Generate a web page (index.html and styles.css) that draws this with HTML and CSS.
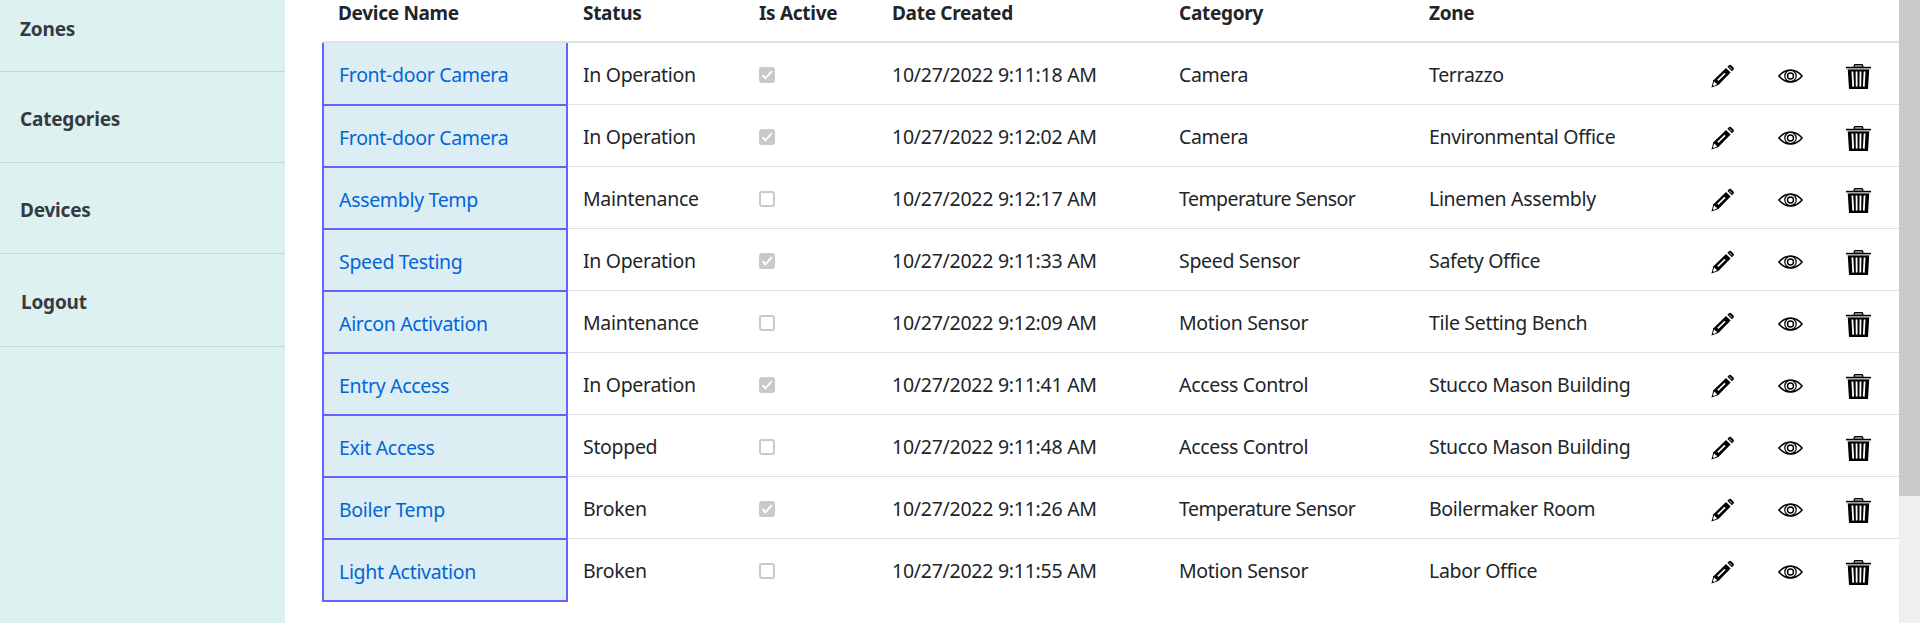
FILE: index.html
```html
<!DOCTYPE html>
<html lang="en">
<head>
<meta charset="utf-8">
<title>Devices</title>
<link rel="stylesheet" href="styles.css">
</head>
<body>
<svg class="sprite" aria-hidden="true">
  <symbol id="pencil" viewBox="0 0 24 24">
    <path d="M.4 23.5 2.4 16.2 15 4 19.6 8.6 7.4 21Z" fill="#000"/>
    <path d="M16.4 2.8 18.2 1Q19.2.3 20.2 1.2L22.4 3.4Q23.3 4.5 22.6 5.4L20.8 7.2Z" fill="#000"/>
    <path d="M6.8 16.3 14 9.4" stroke="#fff" stroke-width="1.6"/>
    <path d="M1.9 21 3.2 17.4 6.2 20.3 2.9 21.9Z" fill="#fff"/>
    <path d="M18.4 2.8 20.8 5.2" stroke="#fff" stroke-width=".9"/>
  </symbol>
  <symbol id="eye" viewBox="0 0 25 14">
    <g fill="none" stroke="#000" stroke-width="1.5">
      <path d="M.9 7Q6 .9 12.5.9T24.1 7Q19 13.1 12.5 13.1T.9 7Z"/>
      <circle cx="12.5" cy="7" r="5.7" stroke-width="1.2"/>
      <circle cx="12.5" cy="7" r="3" stroke-width="1.4"/>
    </g>
  </symbol>
  <symbol id="trash" viewBox="0 0 25 25">
    <path d="M8.2 3V1.6Q8.4.5 9.8.5h5.4q1.4 0 1.6 1.1V3" fill="#888" stroke="#000" stroke-width="1.2"/>
    <path d="M0 2.8h25v1.6H0z" fill="#000"/>
    <path d="M1.4 4.4h22.2v1.2H1.4z" fill="#aaa"/>
    <path d="M1.8 5.5h21.4L22 25H3z" fill="#000"/>
    <path d="M6.4 7.5 7.2 22.6M10.5 7.5l.2 15.1M14.5 7.5l-.2 15.1M18.6 7.5 17.8 22.6" stroke="#fff" stroke-width="1.8"/>
  </symbol>
</svg>
<aside class="sidebar">
  <a class="nav zones">Zones</a>
  <a class="nav">Categories</a>
  <a class="nav">Devices</a>
  <a class="nav logout">Logout</a>
</aside>
<main class="content">
  <div class="head">
    <span class="h-name">Device Name</span><span>Status</span><span>Is Active</span><span>Date Created</span><span>Category</span><span>Zone</span>
  </div>
  <div class="row"><a class="name">Front-door Camera</a><span>In Operation</span><i class="check on"><svg viewBox="0 0 16 16"><path d="M3.5 8.3 6.5 11.3 12.8 4.2"/></svg></i><span class="date">10/27/2022 9:11:18 AM</span><span>Camera</span><span>Terrazzo</span><svg class="pencil"><use href="#pencil"/></svg><svg class="eye"><use href="#eye"/></svg><svg class="trash"><use href="#trash"/></svg></div>
  <div class="row"><a class="name">Front-door Camera</a><span>In Operation</span><i class="check on"><svg viewBox="0 0 16 16"><path d="M3.5 8.3 6.5 11.3 12.8 4.2"/></svg></i><span class="date">10/27/2022 9:12:02 AM</span><span>Camera</span><span>Environmental Office</span><svg class="pencil"><use href="#pencil"/></svg><svg class="eye"><use href="#eye"/></svg><svg class="trash"><use href="#trash"/></svg></div>
  <div class="row"><a class="name">Assembly Temp</a><span>Maintenance</span><i class="check"></i><span class="date">10/27/2022 9:12:17 AM</span><span class="tight">Temperature Sensor</span><span>Linemen Assembly</span><svg class="pencil"><use href="#pencil"/></svg><svg class="eye"><use href="#eye"/></svg><svg class="trash"><use href="#trash"/></svg></div>
  <div class="row"><a class="name">Speed Testing</a><span>In Operation</span><i class="check on"><svg viewBox="0 0 16 16"><path d="M3.5 8.3 6.5 11.3 12.8 4.2"/></svg></i><span class="date">10/27/2022 9:11:33 AM</span><span>Speed Sensor</span><span>Safety Office</span><svg class="pencil"><use href="#pencil"/></svg><svg class="eye"><use href="#eye"/></svg><svg class="trash"><use href="#trash"/></svg></div>
  <div class="row"><a class="name">Aircon Activation</a><span>Maintenance</span><i class="check"></i><span class="date">10/27/2022 9:12:09 AM</span><span>Motion Sensor</span><span>Tile Setting Bench</span><svg class="pencil"><use href="#pencil"/></svg><svg class="eye"><use href="#eye"/></svg><svg class="trash"><use href="#trash"/></svg></div>
  <div class="row"><a class="name">Entry Access</a><span>In Operation</span><i class="check on"><svg viewBox="0 0 16 16"><path d="M3.5 8.3 6.5 11.3 12.8 4.2"/></svg></i><span class="date">10/27/2022 9:11:41 AM</span><span>Access Control</span><span>Stucco Mason Building</span><svg class="pencil"><use href="#pencil"/></svg><svg class="eye"><use href="#eye"/></svg><svg class="trash"><use href="#trash"/></svg></div>
  <div class="row"><a class="name">Exit Access</a><span>Stopped</span><i class="check"></i><span class="date">10/27/2022 9:11:48 AM</span><span>Access Control</span><span>Stucco Mason Building</span><svg class="pencil"><use href="#pencil"/></svg><svg class="eye"><use href="#eye"/></svg><svg class="trash"><use href="#trash"/></svg></div>
  <div class="row"><a class="name">Boiler Temp</a><span>Broken</span><i class="check on"><svg viewBox="0 0 16 16"><path d="M3.5 8.3 6.5 11.3 12.8 4.2"/></svg></i><span class="date">10/27/2022 9:11:26 AM</span><span class="tight">Temperature Sensor</span><span>Boilermaker Room</span><svg class="pencil"><use href="#pencil"/></svg><svg class="eye"><use href="#eye"/></svg><svg class="trash"><use href="#trash"/></svg></div>
  <div class="row"><a class="name">Light Activation</a><span>Broken</span><i class="check"></i><span class="date">10/27/2022 9:11:55 AM</span><span>Motion Sensor</span><span>Labor Office</span><svg class="pencil"><use href="#pencil"/></svg><svg class="eye"><use href="#eye"/></svg><svg class="trash"><use href="#trash"/></svg></div>
</main>
<div class="scrollbar"><div class="thumb"></div></div>
</body>
</html>
```
FILE: styles.css
```css
* { box-sizing: border-box; }
body {
  margin: 0;
  height: 623px;
  overflow: hidden;
  display: flex;
  background: #fff;
  color: #212529;
  font: 19.5px/30px "Segoe UI", "Noto Sans", sans-serif;
  letter-spacing: -0.32px;
  white-space: nowrap;
}
.sprite { display: none; }
.sidebar { width: 285px; background: #ddf1f0; flex: none; }
.nav {
  display: flex;
  align-items: center;
  height: 91px;
  padding: 4px 0 0 20px;
  border-bottom: 1px solid #c1d8d8;
  color: #343a40;
  font-size: 19px;
  font-weight: 700;
  letter-spacing: -0.2px;
}
.zones { height: 72px; padding: 0 0 14px 20px; }
.logout { height: 93px; padding-left: 21px; }
.content { flex: 1; padding-left: 37px; }
.head, .row {
  display: grid;
  grid-template-columns: 261px 176px 133px 287px 250px 282px 67px 68px 1fr;
  align-items: center;
}
.head {
  height: 43px;
  padding-bottom: 15px;
  border-bottom: 2px solid #dee2e6;
  font-size: 19px;
  line-height: 26px;
  font-weight: 700;
  letter-spacing: -0.3px;
}
.h-name { padding-left: 16px; }
.row { height: 62px; border-bottom: 1px solid #dee2e6; }
.row:last-child { border-color: transparent; }
.row > span { padding-top: 2px; }
.date { letter-spacing: -0.26px; }
.tight { letter-spacing: -0.55px; }
.name {
  position: relative;
  align-self: stretch;
  display: flex;
  align-items: center;
  width: 246px;
  margin: 1px 0 -2px;
  padding: 3px 0 0 15px;
  border: 2px solid #6563ff;
  border-top: 0;
  background: #dcedf4;
  color: #0366d6;
}
.head + .row .name { margin-top: 0; }
.check {
  width: 16px;
  height: 16px;
  margin-top: 3px;
  border: 2px solid #c8c8ce;
  border-radius: 3px;
  background: #fff;
}
.on { border: 0; background: #c8c8ce; }
.on svg { display: block; fill: none; stroke: #fff; stroke-width: 2; }
.pencil { width: 24px; height: 24px; margin-top: 5px; }
.eye { width: 25px; height: 14px; margin-top: 5px; }
.trash { width: 25px; height: 25px; margin-top: 5px; }
.scrollbar { width: 21px; background: #efefef; flex: none; }
.thumb { height: 496px; background: #cacaca; }
```
